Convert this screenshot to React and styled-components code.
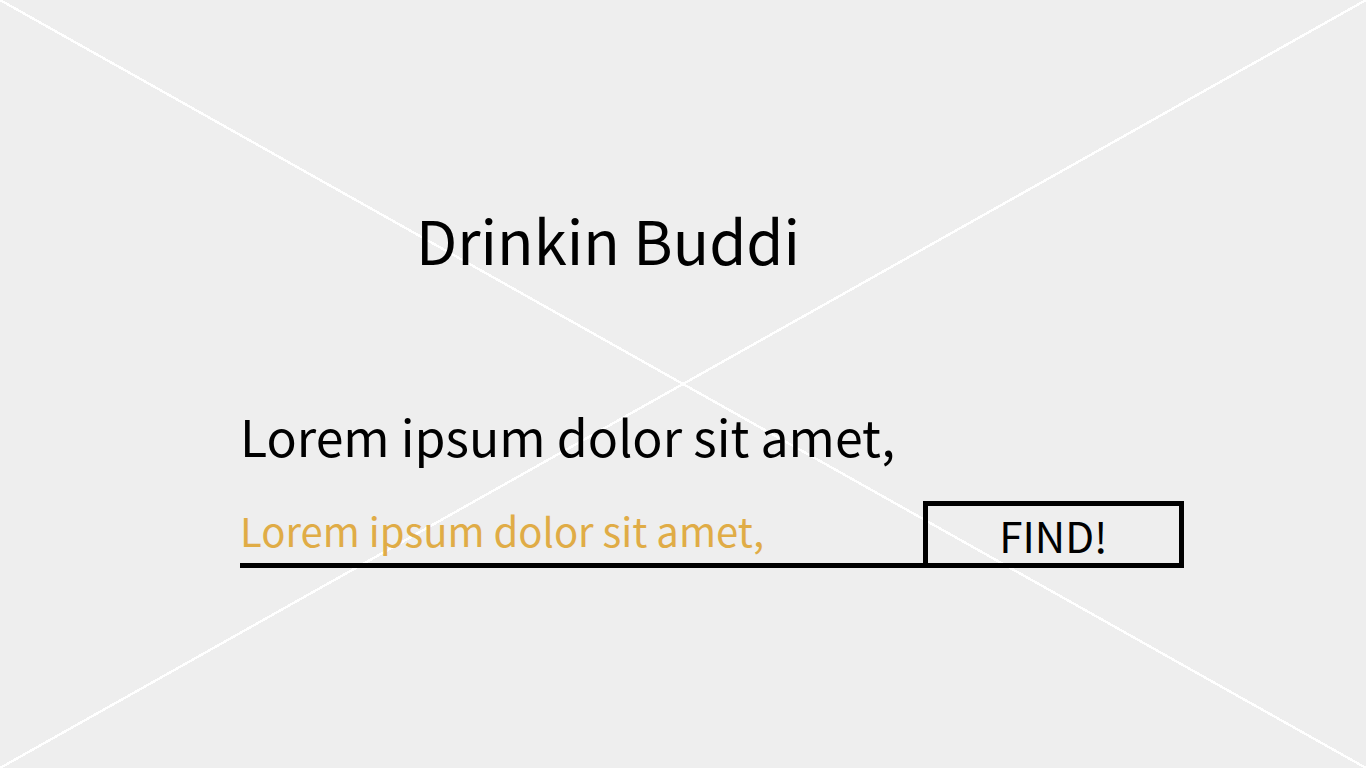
import React from "react";
import styled, { createGlobalStyle } from "styled-components";

const GlobalStyle = createGlobalStyle`
  * { box-sizing: border-box; }
  body {
    margin: 0;
    font-family: "Noto Sans CJK JP", "Noto Sans", sans-serif;
    color: #000;
  }
`;

const line = "transparent calc(50% - 1.2px), #fff calc(50% - 1.2px), #fff calc(50% + 1.2px), transparent calc(50% + 1.2px)";

const Page = styled.div`
  min-height: 100vh;
  padding: 209px 0 0 240px;
  background-color: #eee;
  background-image:
    linear-gradient(to top right, ${line}),
    linear-gradient(to bottom right, ${line});
`;

const Content = styled.div`
  width: 944px;
  display: flex;
  flex-direction: column;
`;

const Title = styled.h1`
  margin: 0 0 141px 176px;
  font-size: 60px;
  font-weight: 400;
  line-height: 1;
`;

const Lead = styled.p`
  margin: 0 0 41px;
  font-size: 50px;
  line-height: 1;
`;

const SearchRow = styled.form`
  display: flex;
  align-items: flex-end;
`;

const Field = styled.div`
  flex: 1;
  padding: 8px 0 13px;
  border-bottom: 5px solid #000;
  font-size: 40px;
  line-height: 1;
  color: #e0ac46;
`;

const FindButton = styled.button`
  width: 261px;
  height: 67px;
  padding: 0;
  border: 5px solid #000;
  background: transparent;
  font-family: inherit;
  font-size: 42px;
  line-height: 1;
  color: #000;
  cursor: pointer;
`;

export default function App() {
  return (
    <>
      <GlobalStyle />
      <Page>
        <Content>
          <Title>Drinkin Buddi</Title>
          <Lead>Lorem ipsum dolor sit amet,</Lead>
          <SearchRow onSubmit={(e) => e.preventDefault()}>
            <Field>Lorem ipsum dolor sit amet,</Field>
            <FindButton type="submit">FIND!</FindButton>
          </SearchRow>
        </Content>
      </Page>
    </>
  );
}
